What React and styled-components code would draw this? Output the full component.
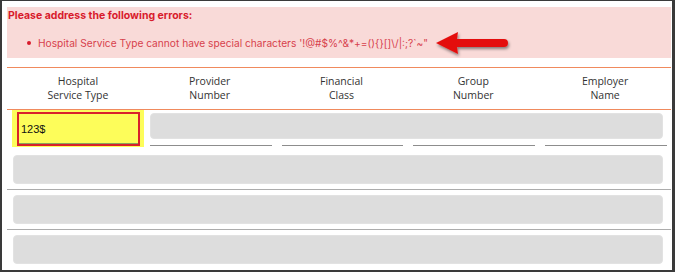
import styled, { createGlobalStyle } from "styled-components";

const GlobalStyle = createGlobalStyle`
  html, body { margin: 0; padding: 0; background: #ffffff; }
  body { font-family: "Open Sans", "Liberation Sans", sans-serif; }
`;

const Frame = styled.div`
  position: relative;
  box-sizing: border-box;
  width: 675px;
  height: 272px;
  border: 2px solid #3a3a3a;
  border-top-width: 1px;
  border-right-width: 3px;
  padding: 6px 1px 0 5px;
  overflow: hidden;
`;

const ErrorBox = styled.div`
  background: #f9dad8;
  height: 51px;
  box-sizing: border-box;
  padding: 1px 0 0 1px;
  font-family: Inter, "Noto Sans", sans-serif;
`;

const ErrorTitle = styled.div`
  color: #d81b2c;
  font-weight: 700;
  font-size: 10.5px;
  line-height: 15px;
`;

const ErrorList = styled.ul`
  margin: 13px 0 0 0;
  padding: 0 0 0 19px;
  list-style: none;
`;

const ErrorItem = styled.li`
  display: flex;
  align-items: center;
  gap: 7px;
  color: #d7414c;
  font-size: 10.2px;
  line-height: 14px;
  &::before {
    content: "";
    width: 4px;
    height: 4px;
    border-radius: 50%;
    background: #d81b2c;
  }
`;

const Arrow = styled.svg`
  position: absolute;
  left: 430px;
  top: 28px;
`;

const Table = styled.div`
  margin-top: 9px;
  border-top: 1px solid #f08a5d;
`;

const Grid = styled.div`
  display: grid;
  grid-template-columns: repeat(5, 1fr);
  padding-left: 5px;
`;

const Header = styled(Grid)`
  height: 41px;
  align-items: center;
  border-bottom: 1px solid #f08a5d;
`;

const HeadCell = styled.div`
  text-align: center;
  color: #333333;
  font-size: 10.5px;
  line-height: 14px;
  margin-top: -1px;
`;

const FirstRow = styled(Grid)`
  grid-template-rows: 29px 11px;
  height: 40px;
`;

const Highlight = styled.div`
  grid-row: 1 / 3;
  background: #fdfd5a;
  height: 37px;
  padding: 2px 4px 1px 5px;
  box-sizing: border-box;
`;

const TextInput = styled.div`
  box-sizing: border-box;
  height: 34px;
  border: 2px solid #d9212b;
  box-shadow: inset 0 -1px 0 #8aa35a;
  display: flex;
  align-items: center;
  padding-left: 2px;
  font-family: "Liberation Sans", Arial, sans-serif;
  font-size: 11px;
  color: #111111;
`;

const Bar = styled.div`
  background: #dddddd;
  border: 1px solid #e2e2e2;
  border-radius: 4px;
  box-sizing: border-box;
  height: ${(p) => p.$h}px;
`;

const WideBar = styled(Bar)`
  grid-column: 2 / 6;
  margin: 3px 8px 0 6px;
`;

const Underline = styled.div`
  align-self: start;
  margin: 5px 4px 0 6px;
  height: 1px;
  border-bottom: 1px solid #8d8d8d;
`;

const Row = styled.div`
  padding: 5px 8px 5px 6px;
  border-bottom: ${(p) => (p.$last ? "none" : "1px solid #acacac")};
`;

const columns = [
  ["Hospital", "Service Type"],
  ["Provider", "Number"],
  ["Financial", "Class"],
  ["Group", "Number"],
  ["Employer", "Name"],
];

export default function App() {
  return (
    <>
      <GlobalStyle />
      <Frame>
        <ErrorBox>
          <ErrorTitle>Please address the following errors:</ErrorTitle>
          <ErrorList>
            <ErrorItem>
              Hospital Service Type cannot have special characters '!@#$%^&amp;*+=(){"{}"}[]\/|:;?`~"
            </ErrorItem>
          </ErrorList>
        </ErrorBox>
        <Arrow width="82" height="30" viewBox="0 0 82 30">
          <defs>
            <filter id="sh" x="-20%" y="-40%" width="140%" height="180%">
              <feDropShadow dx="1" dy="2" stdDeviation="1.4" floodColor="#000" floodOpacity="0.45" />
            </filter>
          </defs>
          <path
            d="M4 14 L26 3 L25 10 L72 10 Q76 10 76 14 Q76 18 72 18 L25 18 L26 25 Z"
            fill="#e4100f"
            filter="url(#sh)"
          />
        </Arrow>
        <Table>
          <Header>
            {columns.map(([a, b]) => (
              <HeadCell key={a}>
                {a}
                <br />
                {b}
              </HeadCell>
            ))}
          </Header>
          <FirstRow>
            <Highlight>
              <TextInput>123$</TextInput>
            </Highlight>
            <WideBar $h={26} />
            <Underline />
            <Underline />
            <Underline />
            <Underline />
          </FirstRow>
          <Row>
            <Bar $h={29} />
          </Row>
          <Row>
            <Bar $h={29} />
          </Row>
          <Row $last>
            <Bar $h={29} />
          </Row>
        </Table>
      </Frame>
    </>
  );
}
